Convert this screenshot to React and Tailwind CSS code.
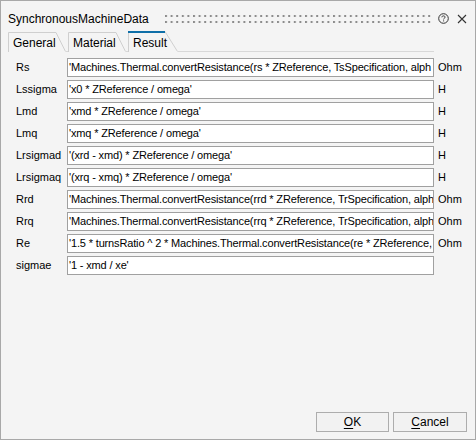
import React from "react";

// values as they show in the fields (the longer ones run past the box edge)
const rows = [
    { label: "Rs", value: "'Machines.Thermal.convertResistance(rs * ZReference, TsSpecification, alph", unit: "Ohm" },
    { label: "Lssigma", value: "'x0 * ZReference / omega'", unit: "H" },
    { label: "Lmd", value: "'xmd * ZReference / omega'", unit: "H" },
    { label: "Lmq", value: "'xmq * ZReference / omega'", unit: "H" },
    { label: "Lrsigmad", value: "'(xrd - xmd) * ZReference / omega'", unit: "H" },
    { label: "Lrsigmaq", value: "'(xrq - xmq) * ZReference / omega'", unit: "H" },
    { label: "Rrd", value: "'Machines.Thermal.convertResistance(rrd * ZReference, TrSpecification, alph", unit: "Ohm" },
    { label: "Rrq", value: "'Machines.Thermal.convertResistance(rrq * ZReference, TrSpecification, alph", unit: "Ohm" },
    { label: "Re", value: "'1.5 * turnsRatio ^ 2 * Machines.Thermal.convertResistance(re * ZReference,", unit: "Ohm" },
    { label: "sigmae", value: "'1 - xmd / xe'", unit: "" },
];

function Tab({ label, width, active }) {
    // outline with the slanted right edge
    const h = active ? 21 : 20;
    const slant = active ? 13 : 10;
    return (
        <div className={`relative shrink-0 ${active ? "h-[21px]" : "h-[20px]"}`} style={{ width }}>
            <svg className="absolute inset-0" width={width} height={h}>
                <path
                    d={`M0.5 ${h} V0.5 H${width - slant} L${width - 0.5} ${h - 0.5}`}
                    fill="none"
                    stroke="#cfcfcf"
                />
                {active && <rect x="0" y="0" width={width - slant} height="2" fill="#0f6fa8" />}
            </svg>
            <span className={`relative block pl-[5px] text-[12px] text-black ${active ? "pt-[3px]" : "pt-[2px]"}`}>{label}</span>
        </div>
    );
}

export default function App() {
    return (
        <div className="w-[476px] h-[440px] bg-[#f4f4f4] border border-[#a8a8a8] flex flex-col font-['Liberation_Sans',Arial,sans-serif] text-black">
            {/* Title bar */}
            <div className="flex items-center h-[29px] pt-[6px] pl-[7px] pr-[9px]">
                <span className="text-[12px] leading-none whitespace-nowrap">SynchronousMachineData</span>
                <svg className="ml-[16px] shrink-0" width="266" height="8">
                    <defs>
                        <pattern id="grip" width="5.6" height="6" patternUnits="userSpaceOnUse">
                            <rect x="0" y="0" width="2" height="2" fill="#8c8c8c" />
                        </pattern>
                    </defs>
                    <rect x="0" y="0" width="266" height="8" fill="url(#grip)" />
                </svg>
                <svg className="ml-[7px] shrink-0" width="11" height="11" viewBox="0 0 11 11">
                    <circle cx="5.5" cy="5.5" r="4.8" fill="none" stroke="#333" strokeWidth="1" />
                    <path d="M3.9 4.3 C3.9 3.3 4.6 2.9 5.5 2.9 C6.4 2.9 7.1 3.4 7.1 4.2 C7.1 5.1 5.6 5.2 5.6 6.4" fill="none" stroke="#333" strokeWidth="1" />
                    <rect x="5.1" y="7.4" width="1" height="1" fill="#333" />
                </svg>
                <svg className="ml-[8px] shrink-0" width="10" height="10" viewBox="0 0 10 10">
                    <path d="M1 1 L9 9 M9 1 L1 9" stroke="#333" strokeWidth="1.1" />
                </svg>
            </div>

            {/* Tabs */}
            <div className="flex items-end h-[22px] pl-[7px] pr-[41px]">
                <Tab label="General" width={58} />
                <div className="w-[2px] h-[1px] bg-[#d8d8d8] shrink-0" />
                <Tab label="Material" width={58} />
                <div className="w-[2px] h-[1px] bg-[#d8d8d8] shrink-0" />
                <Tab label="Result" width={50} active />
                <div className="flex-1 h-[1px] bg-[#d8d8d8]" />
            </div>

            {/* Rows */}
            <div className="flex flex-col gap-[3px] pt-[6px]">
                {rows.map((r) => (
                    <div key={r.label} className="flex items-center h-[19px]">
                        <span className="w-[66px] pl-[15px] text-[11px] shrink-0">{r.label}</span>
                        <div className="w-[367px] h-[19px] bg-white border border-[#a0a0a0] shrink-0 flex items-center pl-[1px] overflow-hidden">
                            <span className="text-[11px] whitespace-nowrap tracking-[-0.15px]">{r.value}</span>
                        </div>
                        <span className="pl-[4px] text-[11px] whitespace-nowrap">{r.unit}</span>
                    </div>
                ))}
            </div>

            {/* Buttons */}
            <div className="mt-auto flex justify-end gap-[4px] pr-[8px] pb-[7px]">
                <button className="w-[73px] h-[20px] border border-[#adadad] bg-[#f2f2f2] text-[12px] leading-none">
                    <span className="underline underline-offset-2">O</span>K
                </button>
                <button className="w-[74px] h-[20px] border border-[#adadad] bg-[#f2f2f2] text-[12px] leading-none">
                    <span className="underline underline-offset-2">C</span>ancel
                </button>
            </div>
        </div>
    );
}
